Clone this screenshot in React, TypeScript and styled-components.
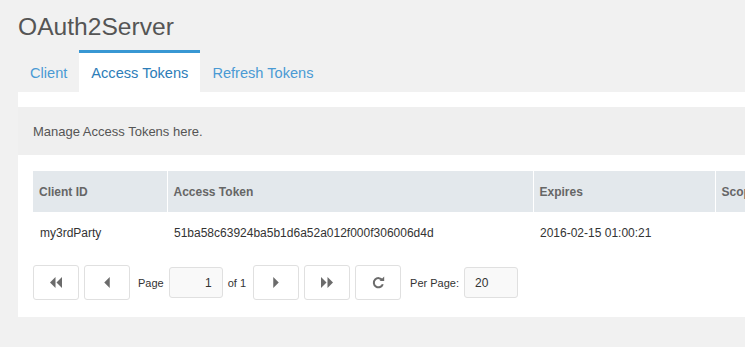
import React from 'react';
import styled, { createGlobalStyle } from 'styled-components';

const GlobalStyle = createGlobalStyle`
  html, body {
    margin: 0;
    padding: 0;
    background: #f1f1f1;
    overflow: hidden;
  }
  body {
    font-family: "Liberation Sans", Arial, sans-serif;
    color: #333;
  }
`;

const Page = styled.div`
  padding-left: 18px;
  width: 900px;
`;

const Title = styled.h1`
  margin: 0;
  padding-top: 12px;
  font-size: 24.6px;
  line-height: 30px;
  font-weight: normal;
  color: #555;
`;

const TabBar = styled.div`
  display: flex;
  margin-top: 8px;
  height: 42px;
`;

const Tab = styled.div<{ $active?: boolean }>`
  display: flex;
  align-items: center;
  padding: 0 12px;
  font-size: 14.6px;
  border-top: 3px solid ${p => (p.$active ? '#3897d3' : 'transparent')};
  background: ${p => (p.$active ? '#fff' : 'transparent')};
  color: ${p => (p.$active ? '#2d7db8' : '#4a9ad4')};
`;

const Panel = styled.div`
  background: #fff;
  padding: 15px 0 17px 0;
`;

const Notice = styled.div`
  background: #efefef;
  height: 48px;
  padding-left: 15px;
  display: flex;
  align-items: center;
  font-size: 13px;
  color: #555;
`;

const Body = styled.div`
  padding: 16px 15px 0 15px;
`;

const Table = styled.table`
  border-collapse: collapse;
  table-layout: fixed;
  width: 900px;
  font-size: 12px;
`;

const Th = styled.th`
  background: #e3e8ec;
  height: 41px;
  padding: 0 6px;
  text-align: left;
  font-weight: bold;
  color: #666;
  border-left: 1px solid #fff;
  &:first-child {
    border-left: none;
  }
`;

const Td = styled.td`
  height: 42px;
  padding: 0 7px;
  color: #333;
`;

const Pager = styled.div`
  display: flex;
  align-items: center;
  gap: 5px;
  margin-top: 11px;
`;

const PageButton = styled.div`
  width: 44px;
  height: 33px;
  border: 1px solid #e0e0e0;
  border-radius: 3px;
  background: #fff;
  display: flex;
  align-items: center;
  justify-content: center;
  color: #6b6b6b;
`;

const Label = styled.span<{ $lead?: number; $trail?: number }>`
  font-size: 11px;
  color: #333;
  padding: 0 ${p => p.$trail ?? 0}px 0 ${p => p.$lead ?? 0}px;
`;

const Field = styled.div<{ $align: 'left' | 'right' }>`
  width: 32px;
  height: 29px;
  border: 1px solid #e0e0e0;
  border-radius: 3px;
  background: #f9f9f9;
  font-size: 12px;
  color: #333;
  display: flex;
  align-items: center;
  justify-content: ${p => (p.$align === 'right' ? 'flex-end' : 'flex-start')};
  padding: 0 10px;
`;

const Arrow = ({ dir, double }: { dir: 'left' | 'right'; double?: boolean }) => {
  const one = dir === 'left' ? 'M5.5 0 L0 5.5 L5.5 11 Z' : 'M0 0 L5.5 5.5 L0 11 Z';
  const two = dir === 'left' ? 'M12 0 L6.5 5.5 L12 11 Z' : 'M6.5 0 L12 5.5 L6.5 11 Z';
  return (
    <svg width={double ? 12 : 6} height={11} viewBox={double ? '0 0 12 11' : '0 0 5.5 11'} fill="#6b6b6b">
      <path d={one} />
      {double && <path d={two} />}
    </svg>
  );
};

const RefreshIcon = () => (
  <svg width="13" height="13" viewBox="0 0 13 13">
    <path d="M10.3 4.2 A4.6 4.6 0 1 0 10.8 8.2" fill="none" stroke="#6b6b6b" strokeWidth="2" />
    <path d="M7.6 5.1 L12.2 5.1 L12.2 0.6 Z" fill="#6b6b6b" />
  </svg>
);

function App() {
  return (
    <>
      <GlobalStyle />
      <Page>
        <Title>OAuth2Server</Title>
        <TabBar>
          <Tab>Client</Tab>
          <Tab $active>Access Tokens</Tab>
          <Tab>Refresh Tokens</Tab>
        </TabBar>
        <Panel>
          <Notice>Manage Access Tokens here.</Notice>
          <Body>
            <Table>
              <colgroup>
                <col style={{ width: 134 }} />
                <col style={{ width: 366 }} />
                <col style={{ width: 182 }} />
                <col style={{ width: 218 }} />
              </colgroup>
              <thead>
                <tr>
                  <Th>Client ID</Th>
                  <Th>Access Token</Th>
                  <Th>Expires</Th>
                  <Th>Scope</Th>
                </tr>
              </thead>
              <tbody>
                <tr>
                  <Td>my3rdParty</Td>
                  <Td>51ba58c63924ba5b1d6a52a012f000f306006d4d</Td>
                  <Td>2016-02-15 01:00:21</Td>
                  <Td></Td>
                </tr>
              </tbody>
            </Table>
            <Pager>
              <PageButton><Arrow dir="left" double /></PageButton>
              <PageButton><Arrow dir="left" /></PageButton>
              <Label $lead={3}>Page</Label>
              <Field $align="right">1</Field>
              <Label $trail={2}>of 1</Label>
              <PageButton><Arrow dir="right" /></PageButton>
              <PageButton><Arrow dir="right" double /></PageButton>
              <PageButton><RefreshIcon /></PageButton>
              <Label $lead={4}>Per Page:</Label>
              <Field $align="left">20</Field>
            </Pager>
          </Body>
        </Panel>
      </Page>
    </>
  );
}

export default App;
